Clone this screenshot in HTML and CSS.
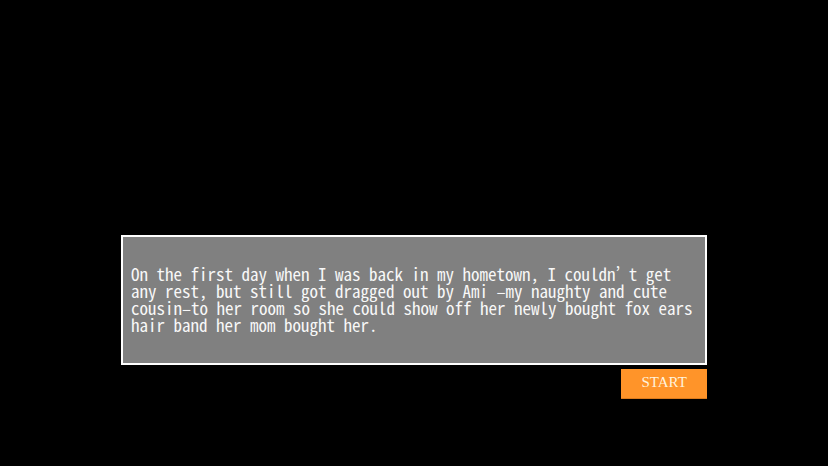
FILE: index.html
```html
<!DOCTYPE html>
<html lang="en">
<head>
    <meta charset="UTF-8">
    <meta name="viewport" content="width=device-width, initial-scale=1">
    <title>Start</title>
    <link rel="stylesheet" href="styles.css">
</head>
<body>

    <main class="scene">
        <!-- Dialogue box -->
        <div class="dialogue">
            <p class="dialogue-text" lang="ja">On the first day when I was back in my hometown, I couldn’ t get any rest, but still got dragged out by Ami –my naughty and cute cousin–to her room so she could show off her newly bought fox ears hair band her mom bought her.</p>
        </div>

        <button type="button" class="start-button">START</button>
    </main>

</body>
</html>
```
FILE: styles.css
```css
:root {
    --background-color: #000;
    --box-background: #808080;
    --box-border: #fff;
    --text-color: #f8f8f8;
    --button-background: #ff9429;
    --button-shadow: #dc7b1c;
}

* {
    box-sizing: border-box;
}

body {
    margin: 0;
    background-color: var(--background-color);
    color: var(--text-color);
}

.scene {
    display: flex;
    flex-direction: column;
    align-items: flex-end;
    justify-content: flex-end;
    gap: 4px;
    width: 70.8%;
    min-height: 100vh;
    margin: 0 auto;
    padding-bottom: 67px;
}

.dialogue {
    width: 100%;
    padding: 28px 8px 30px;
    background-color: var(--box-background);
    border: 2px solid var(--box-border);
}

.dialogue-text {
    margin: 0;
    font-family: "Noto Sans Mono CJK JP", "Noto Sans CJK JP", monospace;
    font-size: 17px;
    font-weight: 300;
    line-height: 17px;
}

.start-button {
    width: 86px;
    height: 30px;
    padding: 0 0 2px;
    background-color: var(--button-background);
    border: none;
    border-bottom: 1px solid var(--button-shadow);
    color: #fff3dc;
    font-family: "Liberation Serif", serif;
    font-size: 15px;
    cursor: pointer;
}
```
